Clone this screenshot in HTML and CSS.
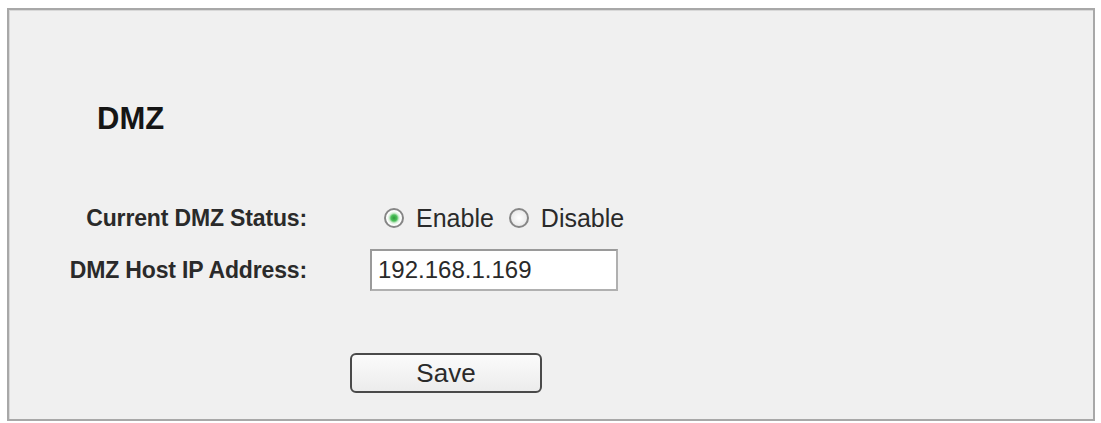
FILE: index.html
```html
<!DOCTYPE html>
<html lang="en">
<head>
  <meta charset="UTF-8">
  <title>DMZ</title>
  <link rel="stylesheet" href="styles.css">
</head>
<body>
  <div class="panel">
    <h1 class="title">DMZ</h1>
    <form class="form" onsubmit="return false">
      <div class="row status-row">
        <span class="label">Current DMZ Status:</span>
        <div class="field radios">
          <label class="radio"><input type="radio" name="dmz" checked> Enable</label>
          <label class="radio"><input type="radio" name="dmz"> Disable</label>
        </div>
      </div>
      <div class="row ip-row">
        <span class="label">DMZ Host IP Address:</span>
        <div class="field">
          <input type="text" class="ip" value="192.168.1.169">
        </div>
      </div>
      <div class="actions">
        <button class="save">Save</button>
      </div>
    </form>
  </div>
</body>
</html>
```

FILE: styles.css
```css
body {
  margin: 0;
  background: #fff;
  font-family: "Liberation Sans", Arial, sans-serif;
  color: #222;
}
.panel {
  box-sizing: border-box;
  height: 413px;
  margin: 8px 6px 0 7px;
  padding: 94px 0 0 0;
  background: #f0f0f0;
  border: 2px solid #a8a8a8;
  box-shadow: inset 1px 1px 0 #d8d8d8;
}
.title {
  margin: 0 0 66px 88px;
  font-size: 31px;
  line-height: 30px;
  font-weight: bold;
  color: #151515;
}
.form {
  margin: 0;
}
.row {
  display: grid;
  grid-template-columns: 298px auto;
  column-gap: 63px;
  align-items: center;
}
.status-row {
  height: 36px;
  margin-bottom: 13px;
}
.ip-row {
  height: 42px;
}
.label {
  text-align: right;
  font-size: 23px;
  font-weight: bold;
  color: #2a2a2a;
  letter-spacing: -0.15px;
}
.radios {
  display: flex;
  align-items: center;
  padding-left: 14px;
}
.radio {
  display: flex;
  align-items: center;
  font-size: 25px;
  color: #2a2a2a;
  margin-right: 15px;
}
.radio input {
  appearance: none;
  box-sizing: border-box;
  width: 20px;
  height: 20px;
  margin: 0 12px 0 0;
  border: 2px solid #868686;
  border-radius: 50%;
  background: radial-gradient(circle, #fff 0, #e2e2e2 100%);
}
.radio input:checked {
  background: radial-gradient(circle, #2e9a3a 0, #4cc05a 3px, #d8efd9 5px, #fff 7px);
}
.ip {
  box-sizing: border-box;
  width: 248px;
  height: 42px;
  padding: 0 6px;
  border: 2px solid #b0b0b0;
  border-top-color: #9a9a9a;
  border-left-color: #9a9a9a;
  background: #fff;
  font-family: "Liberation Sans", Arial, sans-serif;
  font-size: 24px;
  color: #2a2a2a;
}
.actions {
  margin: 62px 0 0 341px;
}
.save {
  box-sizing: border-box;
  width: 192px;
  height: 40px;
  border: 2px solid #4a4a4a;
  border-radius: 6px;
  background: linear-gradient(#fbfbfb, #ececec);
  font-family: "Liberation Sans", Arial, sans-serif;
  font-size: 26px;
  color: #2a2a2a;
}
```
